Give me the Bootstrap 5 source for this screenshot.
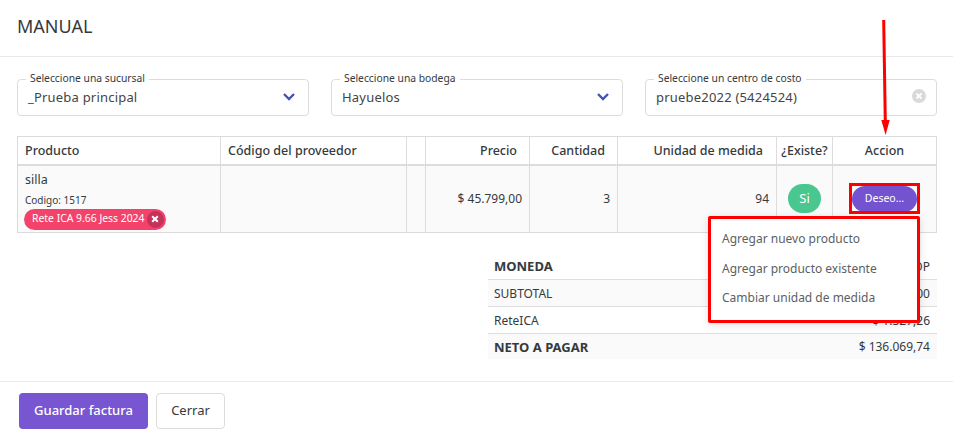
<!DOCTYPE html>
<html lang="es">
<head>
  <meta charset="UTF-8" />
  <meta name="viewport" content="width=device-width, initial-scale=1.0" />
  <title>Manual</title>
  <link href="https://cdn.jsdelivr.net/npm/bootstrap@5.3.3/dist/css/bootstrap.min.css" rel="stylesheet">
  <style>
    html, body {
      height: 100%;
      margin: 0;
      background: #fff;
      color: #343a40;
      font-family: "Noto Sans", "Open Sans", sans-serif;
      font-size: 13px;
    }

    .page-wrap {
      position: relative;
      width: 953px;
      height: 438px;
      overflow: hidden;
    }

    .modal-top {
      height: 57px;
      padding: 14px 17px 0;
      border-bottom: 1px solid #e9e9ea;
    }

    .modal-top h5 {
      font-size: 18px;
      line-height: 24px;
      font-weight: 400;
      margin: 0;
      color: #343a40;
    }

    .field-row {
      padding: 22px 16px 0 17px;
      gap: 22px;
    }

    .float-field {
      position: relative;
      flex: 1 1 0;
      height: 37px;
      border: 1px solid #dcdcdc;
      border-radius: 4px;
      padding: 8px 12px 0 10px;
    }

    .float-field label {
      position: absolute;
      top: -9px;
      left: 8px;
      padding: 0 4px;
      background: #fff;
      font-size: 10.3px;
      line-height: 15px;
      color: #343a40;
    }

    .float-field .field-value {
      font-size: 13px;
      line-height: 18px;
      letter-spacing: .2px;
      color: #444;
    }

    .float-field svg {
      position: absolute;
      top: 12px;
      right: 12px;
    }

    .float-field svg.clear-icon {
      top: 9px;
      right: 10px;
    }

    .prod-table {
      width: 919px;
      margin: 20px 0 0 17px;
      table-layout: fixed;
      border-color: #dcdcdc;
    }

    .prod-table th, .prod-table td {
      border: 1px solid #dcdcdc;
      padding: 0 7px;
      color: #343a40;
    }

    .prod-table th {
      height: 28px;
      padding-top: 2px;
      font-size: 12.5px;
      font-weight: 500;
      border-bottom-width: 2px;
      vertical-align: middle;
      white-space: nowrap;
    }

    .prod-table th.num-head {
      padding-left: 0;
      padding-right: 12px;
    }

    .prod-table td {
      height: 68px;
      font-size: 12px;
      background: #fafafa;
      vertical-align: middle;
    }

    .prod-table td.prod-cell {
      vertical-align: top;
      padding-top: 5px;
    }

    .prod-name {
      font-size: 12.5px;
      line-height: 17px;
      margin-bottom: 6px;
    }

    .prod-code {
      font-size: 10px;
      line-height: 13px;
      margin-bottom: 2px;
    }

    .tax-pill {
      display: inline-flex;
      align-items: center;
      gap: 2px;
      height: 21px;
      padding: 0 2px 0 8px;
      margin-left: -1px;
      border-radius: 11px;
      background: #f4436b;
      color: #fff;
      font-size: 10.4px;
      white-space: nowrap;
    }

    .tax-pill span {
      display: flex;
      align-items: center;
      justify-content: center;
      width: 17px;
      height: 17px;
      border-radius: 50%;
      background: #c5335a;
    }

    .si-pill {
      display: inline-flex;
      align-items: center;
      justify-content: center;
      width: 33px;
      height: 29px;
      border-radius: 15px;
      background: #4ac78f;
      color: #fff;
      font-size: 13px;
    }

    .deseo-btn {
      width: 65px;
      height: 26px;
      padding: 0;
      border: 0;
      border-radius: 13px;
      background: #7453d0;
      color: #fff;
      font-size: 10.5px;
    }

    .sum-table {
      width: 449px;
      margin: 20px 0 0 488px;
      font-size: 12px;
    }

    .sum-table td {
      height: 27px;
      padding: 2px 7px 0 6px;
      border-bottom: 1px solid #dedede;
      color: #343a40;
      vertical-align: middle;
    }

    .sum-table tr:first-child td {
      height: 26px;
    }

    .sum-table tr:last-child td {
      border-bottom: 0;
      height: 26px;
    }

    .sum-table .shade td {
      background: #fafafa;
    }

    .sum-table .big {
      font-size: 13px;
      font-weight: 700;
    }

    .modal-bottom {
      position: absolute;
      top: 381px;
      left: 0;
      right: 0;
      padding: 11px 19px 0;
      border-top: 1px solid #e9e9ea;
      gap: 8px;
    }

    .btn-guardar {
      width: 129px;
      height: 36px;
      padding: 0;
      border: 0;
      border-radius: 4px;
      background: #7856d2;
      color: #fff;
      font-size: 13px;
      font-weight: 500;
    }

    .btn-cerrar {
      width: 69px;
      height: 36px;
      padding: 0;
      border: 1px solid #dcdcdc;
      border-radius: 4px;
      background: #fff;
      color: #343a40;
      font-size: 13px;
    }

    .deseo-menu {
      display: block;
      position: absolute;
      top: 216px;
      left: 708px;
      width: 212px;
      height: 107px;
      margin: 0;
      padding: 5px 0 0;
      border: 3px solid #f00;
      border-radius: 2px;
      background: #fff;
      box-shadow: 0 2px 8px rgba(0, 0, 0, .12);
    }

    .deseo-menu .dropdown-item {
      padding: 0 11px;
      height: 29.5px;
      line-height: 29.5px;
      font-size: 12px;
      color: #5b5f63;
    }

    .deseo-mark {
      position: absolute;
      top: 183px;
      left: 849px;
      width: 71px;
      height: 31px;
      border: 3px solid #f00;
      pointer-events: none;
    }

    .arrow-mark {
      position: absolute;
      top: 18px;
      left: 875px;
    }
  </style>
</head>
<body>
  <div class="page-wrap">
    <div class="modal-top">
      <h5>MANUAL</h5>
    </div>

    <div class="d-flex field-row">
      <div class="float-field">
        <label>Seleccione una sucursal</label>
        <div class="field-value">_Prueba principal</div>
        <svg width="14" height="10" viewBox="0 0 14 10"><path d="M2 2l5 5 5-5" fill="none" stroke="#4254b5" stroke-width="2.4"/></svg>
      </div>
      <div class="float-field">
        <label>Seleccione una bodega</label>
        <div class="field-value">Hayuelos</div>
        <svg width="14" height="10" viewBox="0 0 14 10"><path d="M2 2l5 5 5-5" fill="none" stroke="#4254b5" stroke-width="2.4"/></svg>
      </div>
      <div class="float-field">
        <label>Seleccione un centro de costo</label>
        <div class="field-value">pruebe2022 (5424524)</div>
        <svg class="clear-icon" width="14" height="14" viewBox="0 0 14 14"><circle cx="7" cy="7" r="7" fill="#d9d9d9"/><path d="M4.5 4.5l5 5m0-5l-5 5" stroke="#fff" stroke-width="1.8"/></svg>
      </div>
    </div>

    <table class="prod-table">
      <colgroup>
        <col style="width:203px"><col style="width:186px"><col style="width:19px"><col style="width:104px"><col style="width:88px"><col style="width:159px"><col style="width:56px"><col style="width:104px">
      </colgroup>
      <thead>
        <tr>
          <th>Producto</th>
          <th>Código del proveedor</th>
          <th></th>
          <th class="text-end num-head">Precio</th>
          <th class="text-end num-head">Cantidad</th>
          <th class="text-end pe-3">Unidad de medida</th>
          <th class="text-center px-0">¿Existe?</th>
          <th class="text-center">Accion</th>
        </tr>
      </thead>
      <tbody>
        <tr>
          <td class="prod-cell">
            <div class="prod-name">silla</div>
            <div class="prod-code">Codigo: 1517</div>
            <div class="tax-pill">Rete ICA 9.66 Jess 2024
              <span><svg width="8" height="8" viewBox="0 0 8 8"><path d="M1.2 1.2l5.6 5.6m0-5.6L1.2 6.8" stroke="#fff" stroke-width="2"/></svg></span>
            </div>
          </td>
          <td></td>
          <td></td>
          <td class="text-end">$ 45.799,00</td>
          <td class="text-end">3</td>
          <td class="text-end">94</td>
          <td class="text-center px-0"><span class="si-pill">Si</span></td>
          <td class="text-center"><button type="button" class="btn deseo-btn">Deseo...</button></td>
        </tr>
      </tbody>
    </table>

    <table class="sum-table">
      <tbody>
        <tr><td class="big">MONEDA</td><td class="text-end">COP</td></tr>
        <tr class="shade"><td>SUBTOTAL</td><td class="text-end">$ 137.397,00</td></tr>
        <tr><td>ReteICA</td><td class="text-end">$ 1.327,26</td></tr>
        <tr class="shade"><td class="big">NETO A PAGAR</td><td class="text-end">$ 136.069,74</td></tr>
      </tbody>
    </table>

    <div class="d-flex modal-bottom">
      <button type="button" class="btn btn-guardar">Guardar factura</button>
      <button type="button" class="btn btn-cerrar">Cerrar</button>
    </div>

    <ul class="dropdown-menu deseo-menu">
      <li><a class="dropdown-item" href="#">Agregar nuevo producto</a></li>
      <li><a class="dropdown-item" href="#">Agregar producto existente</a></li>
      <li><a class="dropdown-item" href="#">Cambiar unidad de medida</a></li>
    </ul>
    <div class="deseo-mark"></div>
    <svg class="arrow-mark" width="18" height="118" viewBox="0 0 18 118">
      <path d="M8.7 2L10.3 104" stroke="#f00" stroke-width="3" fill="none"/>
      <path d="M6.3 102h8.4l-4.1 15z" fill="#f00"/>
    </svg>
  </div>

  <script src="https://cdn.jsdelivr.net/npm/bootstrap@5.3.3/dist/js/bootstrap.bundle.min.js"></script>
</body>
</html>
